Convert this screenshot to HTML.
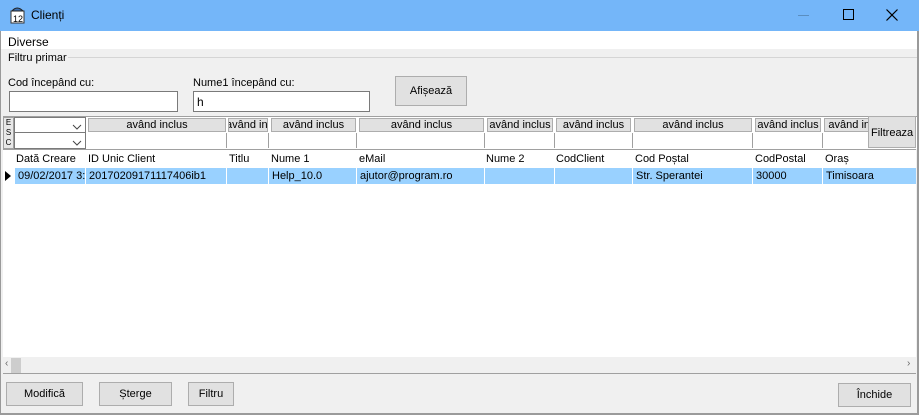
<!DOCTYPE html><html><head><style>
*{box-sizing:border-box;margin:0;padding:0}
body{width:919px;height:415px;position:relative;overflow:hidden;background:#f0f0f0;font-family:"Liberation Sans",sans-serif;font-size:11px;color:#000}
.a{position:absolute;white-space:nowrap}
.btn{position:absolute;background:#e1e1e1;border:1px solid #adadad;text-align:center;font-size:11px;white-space:nowrap}
.inp{position:absolute;background:#fff;border:1px solid #7a7a7a}
.hb{position:absolute;top:118px;height:14px;background:#e1e1e1;border:1px solid #adadad;text-align:center;font-size:11px;line-height:12px;overflow:hidden;white-space:nowrap}
.fc{position:absolute;top:133px;height:15px;background:#fff;border-right:1px solid #a0a0a0}
.ht{position:absolute;top:153px;font-size:11px;white-space:nowrap}
.rc{position:absolute;top:168px;height:16px;line-height:16px;padding-left:3px;border-right:1px solid #fff;font-size:11px;white-space:nowrap;overflow:hidden}
</style></head><body>
<div class="a" style="left:0;top:0;width:919px;height:31px;background:#74b6f9"></div>
<svg class="a" style="left:10px;top:6px" width="16" height="18"><rect x="1" y="5" width="13" height="12" fill="#fff" stroke="#333"/><path d="M2 5 Q7 -1 13 5Z" fill="#3a6fb0" stroke="#222"/><text x="3" y="16" font-size="9" font-family="Liberation Sans">12</text></svg>
<div class="a" style="left:31px;top:8px;font-size:12px">Clienți</div>
<div class="a" style="left:798px;top:15px;width:11px;height:1px;background:#5a8ec0"></div>
<div class="a" style="left:843px;top:9px;width:11px;height:11px;border:1px solid #000"></div>
<svg class="a" style="left:886px;top:9px" width="12" height="12"><path d="M0.5 0.5L11.5 11.5M11.5 0.5L0.5 11.5" stroke="#000" stroke-width="1.2"/></svg>
<div class="a" style="left:0;top:31px;width:917px;height:18px;background:#fff"></div>
<div class="a" style="left:8px;top:35px;font-size:12px">Diverse</div>
<div class="a" style="left:917px;top:31px;width:2px;height:384px;background:#9a9a9a"></div>
<div class="a" style="left:0;top:31px;width:1px;height:384px;background:#9a9a9a"></div>
<div class="a" style="left:68px;top:57px;width:849px;height:1px;background:#d5d5d5"></div>
<div class="a" style="left:8px;top:52px">Filtru primar</div>
<div class="a" style="left:8px;top:77px">Cod începând cu:</div>
<div class="a" style="left:193px;top:77px">Nume1 începând cu:</div>
<div class="inp" style="left:9px;top:91px;width:169px;height:21px"></div>
<div class="inp" style="left:193px;top:91px;width:177px;height:21px;padding:3px 3px;font-size:12px">h</div>
<div class="btn" style="left:395px;top:76px;width:72px;height:30px;line-height:28px">Afișează</div>
<div class="a" style="left:3px;top:116px;width:914px;height:33px;background:#fff;border-top:1px solid #a0a0a0"></div>
<div class="a" style="left:3px;top:117px;width:11px;height:32px;background:#e8e8e8;border:1px solid #a0a0a0;font-size:8px;line-height:10px;text-align:center">E<br>S<br>C</div>
<div class="a" style="left:14px;top:117px;width:72px;height:16px;border:1px solid #7a7a7a;background:#fff"></div>
<div class="a" style="left:14px;top:132px;width:72px;height:17px;border:1px solid #7a7a7a;background:#fff"></div>
<svg class="a" style="left:72px;top:122px" width="10" height="24"><path d="M1 3L5 7L9 3M1 19L5 23L9 19" stroke="#444" fill="none"/></svg>
<div class="hb" style="left:88px;width:138px">având inclus</div>
<div class="hb" style="left:228px;width:40px;text-align:left;text-indent:-3px">având inclus</div>
<div class="hb" style="left:271px;width:85px">având inclus</div>
<div class="hb" style="left:359px;width:125px">având inclus</div>
<div class="hb" style="left:487px;width:66px">având inclus</div>
<div class="hb" style="left:556px;width:75px">având inclus</div>
<div class="hb" style="left:634px;width:118px">având inclus</div>
<div class="hb" style="left:755px;width:66px">având inclus</div>
<div class="hb" style="left:824px;width:70px">având inclus</div>
<div class="fc" style="left:86px;width:141px"></div><div class="fc" style="left:227px;width:42px"></div><div class="fc" style="left:269px;width:88px"></div><div class="fc" style="left:357px;width:128px"></div><div class="fc" style="left:485px;width:70px"></div><div class="fc" style="left:555px;width:78px"></div><div class="fc" style="left:633px;width:120px"></div><div class="fc" style="left:753px;width:70px"></div>
<div class="btn" style="left:868px;top:116px;width:48px;height:32px;line-height:32px;text-align:left;padding-left:2px">Filtreaza</div>
<div class="a" style="left:3px;top:149px;width:913px;height:208px;background:#fff;border-top:1px solid #a0a0a0"></div>
<div class="ht" style="left:16px">Dată Creare</div><div class="ht" style="left:88px">ID Unic Client</div><div class="ht" style="left:229px">Titlu</div><div class="ht" style="left:271px">Nume 1</div><div class="ht" style="left:359px">eMail</div><div class="ht" style="left:486px">Nume 2</div><div class="ht" style="left:556px">CodClient</div><div class="ht" style="left:635px">Cod Poștal</div><div class="ht" style="left:755px">CodPostal</div><div class="ht" style="left:825px">Oraș</div>
<div class="a" style="left:15px;top:168px;width:901px;height:16px;background:#99d1ff"></div>
<svg class="a" style="left:5px;top:171px" width="6" height="10"><path d="M0 0L6 5L0 10Z"/></svg>
<div class="rc" style="left:15px;width:71px">09/02/2017 3:</div><div class="rc" style="left:86px;width:141px">20170209171117406ib1</div><div class="rc" style="left:227px;width:42px"></div><div class="rc" style="left:269px;width:88px">Help_10.0</div><div class="rc" style="left:357px;width:128px">ajutor@program.ro</div><div class="rc" style="left:485px;width:70px"></div><div class="rc" style="left:555px;width:78px"></div><div class="rc" style="left:633px;width:120px">Str. Sperantei</div><div class="rc" style="left:753px;width:70px">30000</div><div class="rc" style="left:823px;width:93px;border:0">Timisoara</div>
<div class="a" style="left:3px;top:357px;width:913px;height:17px;background:#f0f0f0;border-bottom:1px solid #a0a0a0"></div>
<div class="a" style="left:11px;top:358px;width:10px;height:15px;background:#cdcdcd"></div>
<div class="a" style="left:5px;top:358px;font-size:10px;color:#666">‹</div>
<div class="a" style="left:907px;top:358px;font-size:10px;color:#666">›</div>
<div class="btn" style="left:6px;top:382px;width:77px;height:24px;line-height:22px">Modifică</div>
<div class="btn" style="left:99px;top:382px;width:73px;height:24px;line-height:22px">Șterge</div>
<div class="btn" style="left:188px;top:382px;width:46px;height:24px;line-height:22px">Filtru</div>
<div class="btn" style="left:838px;top:383px;width:73px;height:24px;line-height:22px">Închide</div>
<div class="a" style="left:0;top:413px;width:919px;height:2px;background:#9a9a9a"></div>
</body></html>
